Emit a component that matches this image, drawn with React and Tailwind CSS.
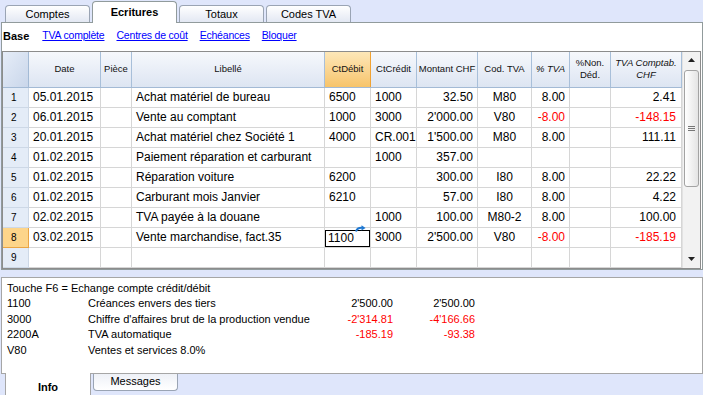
import React from "react";

// Ecritures grid, Banana-style. Widths include the 1px right border of each cell.
const COLS = [
  { key: "date", label: "Date", w: "w-[72px]", j: "justify-start" },
  { key: "piece", label: "Pièce", w: "w-[31px]", j: "justify-start" },
  { key: "libelle", label: "Libellé", w: "w-[193px]", j: "justify-start" },
  { key: "debit", label: "CtDébit", w: "w-[46px]", j: "justify-start", sel: true },
  { key: "credit", label: "CtCrédit", w: "w-[46px]", j: "justify-start" },
  { key: "montant", label: "Montant CHF", w: "w-[61px]", j: "justify-end" },
  { key: "code", label: "Cod. TVA", w: "w-[54px]", j: "justify-center" },
  { key: "pct", label: <i>% TVA</i>, w: "w-[38px]", j: "justify-end" },
  { key: "nonded", label: <>%Non.<br />Déd.</>, w: "w-[41px]", j: "justify-end" },
  { key: "tva", label: <i>TVA Comptab.<br />CHF</i>, w: "w-[71px]", j: "justify-end pr-[5px]" },
];

const ROWS = [
  ["05.01.2015", "", "Achat matériel de bureau", "6500", "1000", "32.50", "M80", "8.00", "", "2.41"],
  ["06.01.2015", "", "Vente au comptant", "1000", "3000", "2'000.00", "V80", "-8.00", "", "-148.15"],
  ["20.01.2015", "", "Achat matériel chez Société 1", "4000", "CR.001", "1'500.00", "M80", "8.00", "", "111.11"],
  ["01.02.2015", "", "Paiement réparation et carburant", "", "1000", "357.00", "", "", "", ""],
  ["01.02.2015", "", "Réparation voiture", "6200", "", "300.00", "I80", "8.00", "", "22.22"],
  ["01.02.2015", "", "Carburant mois Janvier", "6210", "", "57.00", "I80", "8.00", "", "4.22"],
  ["02.02.2015", "", "TVA payée à la douane", "", "1000", "100.00", "M80-2", "8.00", "", "100.00"],
  ["03.02.2015", "", "Vente marchandise, fact.35", "1100", "3000", "2'500.00", "V80", "-8.00", "", "-185.19"],
  ["", "", "", "", "", "", "", "", "", ""],
];

const INFO = [
  ["1100", "Créances envers des tiers", "2'500.00", "2'500.00"],
  ["3000", "Chiffre d'affaires brut de la production vendue", "-2'314.81", "-4'166.66"],
  ["2200A", "TVA automatique", "-185.19", "-93.38"],
  ["V80", "Ventes et services 8.0%", "", ""],
];

function TopTab({ label, active }) {
  if (active) {
    return (
      <div className="relative z-10 -mb-px flex h-[22px] w-[85px] items-center justify-center rounded-t-[4px] border border-b-0 border-[#919b9c] bg-white text-[11px] font-bold">
        {label}
      </div>
    );
  }
  return (
    <div className="flex h-[17px] w-[85px] items-center justify-center rounded-t-[4px] border border-b-0 border-[#9aa4b4] bg-gradient-to-b from-white to-[#e3e8f3] pt-[1px] text-[11px]">
      {label}
    </div>
  );
}

function EditArrow() {
  return (
    <svg className="absolute right-[4px] top-[-3px]" width="11" height="7" viewBox="0 0 11 7" aria-hidden="true">
      <path d="M1 6.5 C2 3.2 4 2.6 7 2.8" fill="none" stroke="#1f78d1" strokeWidth="2" />
      <path d="M6.5 0.2 L10.6 2.9 L6.5 5.4 Z" fill="#1f78d1" />
    </svg>
  );
}

function Scrollbar() {
  return (
    <div className="flex w-[18px] flex-col border-l border-[#e2e2e2] bg-[#f2f2f2]">
      <div className="flex h-[17px] items-center justify-center">
        <svg width="7" height="4" viewBox="0 0 7 4"><path d="M0 4 L3.5 0 L7 4 Z" fill="#222" /></svg>
      </div>
      <div className="mx-[1px] mt-[1px] flex h-[117px] items-center justify-center rounded-[3px] border border-[#a3a3a3] bg-gradient-to-r from-white to-[#e4e4e4]">
        <div className="flex w-[7px] flex-col gap-[1px]">
          <div className="h-px bg-[#777]" />
          <div className="h-px bg-[#777]" />
          <div className="h-px bg-[#777]" />
        </div>
      </div>
      <div className="flex-1" />
      <div className="flex h-[17px] items-center justify-center">
        <svg width="7" height="4" viewBox="0 0 7 4"><path d="M0 0 L7 0 L3.5 4 Z" fill="#222" /></svg>
      </div>
    </div>
  );
}

function Grid() {
  return (
    <div className="flex w-[699px] border-x border-y border-[#8c8c8c] bg-white">
      <div className="flex w-[679px] flex-col">
        <div className="flex h-[36px] border-b border-[#a3bad5]">
          <div className="h-full w-[26px] border-r border-[#a3bad5] bg-gradient-to-br from-[#e6edf8] to-[#c9d6ea]" />
          {COLS.map((c) => (
            <div
              key={c.key}
              className={`flex h-full ${c.w} items-center justify-center border-r text-center text-[9.5px] leading-[12px] text-[#111] ${
                c.sel
                  ? "border-[#f0a233] bg-gradient-to-b from-[#fde7b8] to-[#f7c46a]"
                  : "border-[#a8bfd9] bg-gradient-to-b from-[#f6f8fc] to-[#dde5f2]"
              }`}
            >
              <span>{c.label}</span>
            </div>
          ))}
        </div>
        {ROWS.map((r, i) => {
          const current = i === 7;
          return (
            <div key={i} className="flex h-[20px] text-[12px]">
              <div
                className={`flex h-full w-[26px] items-center border-r border-b pl-[8px] text-[10px] ${
                  current ? "border-[#eaa544] bg-[#fdd58a]" : "border-[#cdd8e6] bg-[#e4ecf7]"
                }`}
              >
                {i + 1}
              </div>
              {COLS.map((c, k) => {
                const v = r[k];
                const red = v.startsWith("-");
                if (current && c.key === "debit") {
                  return (
                    <div key={c.key} className={`relative h-full ${c.w} border-r border-b border-[#d6d6d6] pt-[2px]`}>
                      <div className="flex h-[17px] items-center border border-black pl-[2px]">{v}</div>
                      <EditArrow />
                    </div>
                  );
                }
                return (
                  <div
                    key={c.key}
                    className={`flex h-full ${c.w} ${c.j} items-center border-r border-b border-[#d6d6d6] px-[4px] whitespace-nowrap ${
                      red ? "text-[#ff0000]" : "text-black"
                    }`}
                  >
                    {v}
                  </div>
                );
              })}
            </div>
          );
        })}
      </div>
      <Scrollbar />
    </div>
  );
}

export default function App() {
  return (
    <div className="flex h-[395px] w-[703px] flex-col overflow-hidden bg-[#dfe6fb] font-['Liberation_Sans',Arial,sans-serif] text-black">
      <div className="flex h-[22px] items-end gap-[2px] pl-[5px]">
        <TopTab label="Comptes" />
        <TopTab label="Ecritures" active />
        <TopTab label="Totaux" />
        <TopTab label="Codes TVA" />
      </div>

      <div className="ml-[1px] w-[702px] border border-[#919b9c] bg-white">
        <div className="flex h-[28px] items-center gap-[12px] pl-[1px] pb-[1px] text-[11px]">
          <span className="mr-[1px] font-bold">Base</span>
          <a className="text-[10.5px] tracking-[-0.2px] text-[#0000ff] underline">TVA complète</a>
          <a className="text-[10.5px] tracking-[-0.2px] text-[#0000ff] underline">Centres de coût</a>
          <a className="text-[10.5px] tracking-[-0.2px] text-[#0000ff] underline">Echéances</a>
          <a className="text-[10.5px] tracking-[-0.2px] text-[#0000ff] underline">Bloquer</a>
        </div>
        <Grid />
      </div>

      <div className="h-[7px]" />

      <div className="ml-[1px] h-[99px] w-[702px] border border-[#a6a6a6] bg-white pl-[5px] pt-[3px] text-[11px] leading-[15.5px]">
        <div>Touche F6 = Echange compte crédit/débit</div>
        {INFO.map((l) => (
          <div key={l[0]} className="grid grid-cols-[81px_232px_73px_82px]">
            <span>{l[0]}</span>
            <span className="whitespace-nowrap">{l[1]}</span>
            <span className={`text-right ${l[2].startsWith("-") ? "text-[#ff0000]" : ""}`}>{l[2]}</span>
            <span className={`text-right ${l[3].startsWith("-") ? "text-[#ff0000]" : ""}`}>{l[3]}</span>
          </div>
        ))}
      </div>

      <div className="flex items-start gap-[2px] pl-[5px]">
        <div className="relative z-10 -mt-px flex h-[22px] w-[86px] items-center justify-center border-x border-[#a6a6a6] bg-white pt-[6px] text-[11px] font-bold">
          Info
        </div>
        <div className="flex h-[17px] w-[85px] items-center justify-center rounded-b-[4px] border border-t-0 border-[#9aa4b4] bg-gradient-to-b from-[#eef1f7] to-white pb-[1px] text-[11px]">
          Messages
        </div>
      </div>
    </div>
  );
}
